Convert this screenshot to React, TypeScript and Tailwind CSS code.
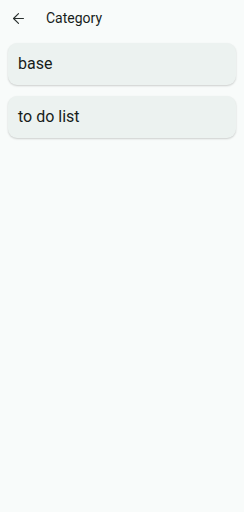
import { ArrowLeft } from "lucide-react";

const categories = ["base", "to do list"];

export default function App() {
    return (
        <div className="w-[244px] h-[512px] bg-[#f8fbfa] font-['Roboto',sans-serif] text-[#171d1b]">
            {/* Top bar */}
            <div className="h-[36px] flex items-center">
                <div className="w-[36px] flex items-center justify-center">
                    <ArrowLeft className="w-[17px] h-[17px] text-[#2a302e]" strokeWidth={1.6} />
                </div>
                <span className="ml-[10px] text-[14px]">Category</span>
            </div>

            {/* List */}
            <div className="flex flex-col gap-[11px] px-[8px] pt-[7px]">
                {categories.map((c) => (
                    <div
                        key={c}
                        className="h-[42px] rounded-[9px] bg-[#ecf2f0] shadow-[0_1px_2px_rgba(0,0,0,0.18)] flex items-center px-[10px] text-[16px]"
                    >
                        {c}
                    </div>
                ))}
            </div>
        </div>
    );
}
